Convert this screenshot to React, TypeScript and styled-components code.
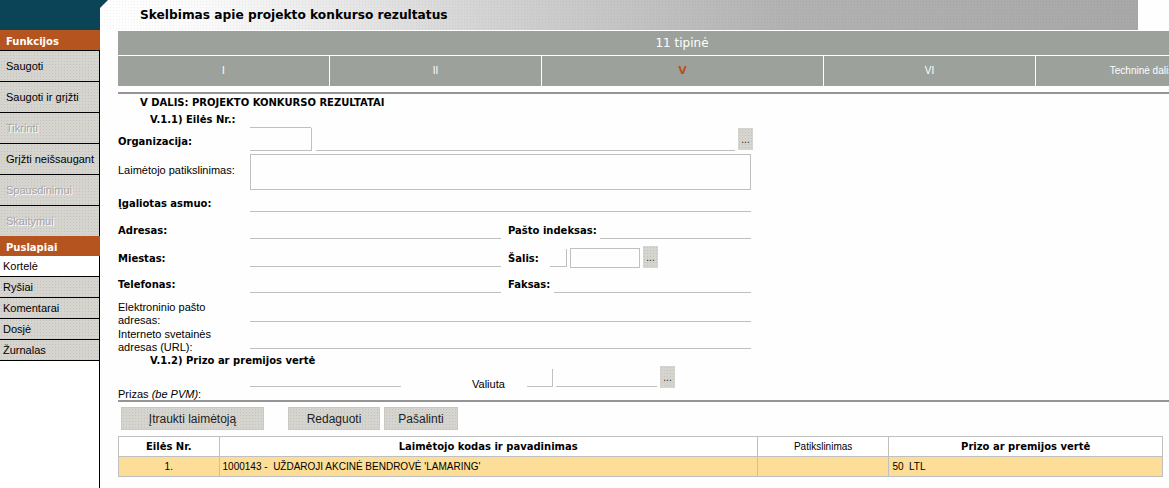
import styled, { createGlobalStyle } from 'styled-components';

const GlobalStyle = createGlobalStyle`
  html, body {
    margin: 0;
    padding: 0;
    background: #fdfefd;
    overflow: hidden;
  }
  body {
    font-family: 'Liberation Sans', Arial, sans-serif;
    font-size: 11px;
    color: #000;
  }
`;

const dots = `
  background-color: #d6d4cf;
  background-image: radial-gradient(#c4c2bd 0.6px, transparent 0.7px);
  background-size: 3px 3px;
`;

const Page = styled.div`
  display: flex;
  width: 1169px;
  height: 488px;
  overflow: hidden;
`;

/* ---------- sidebar ---------- */

const Sidebar = styled.div`
  width: 100px;
  flex-shrink: 0;
  display: flex;
  flex-direction: column;
  background: #fff;
`;

const Brand = styled.div`
  height: 30px;
  background: #0b4457;
  position: relative;
  &::after {
    content: '';
    position: absolute;
    right: -8px;
    top: 0;
    border-top: 8px solid #0b4457;
    border-right: 8px solid transparent;
  }
`;

const SideHeader = styled.div`
  height: 20px;
  background: #b5541e;
  color: #fff;
  font-family: 'DejaVu Sans', Verdana, sans-serif;
  font-weight: bold;
  font-size: 10px;
  line-height: 24px;
  padding-left: 6px;
`;

const SideButton = styled.div<{ $disabled?: boolean }>`
  height: 30px;
  ${dots}
  border-top: 1px solid #000;
  border-right: 1px solid #000;
  padding-left: 6px;
  line-height: 30px;
  font-size: 11px;
  color: ${(p) => (p.$disabled ? '#a4a4a4' : '#000')};
  text-shadow: ${(p) => (p.$disabled ? '1px 1px 0 #fff' : 'none')};
  white-space: nowrap;
  overflow: hidden;
`;

const PageLink = styled.div<{ $active?: boolean }>`
  height: 20px;
  ${(p) => (p.$active ? 'background: #fff;' : dots)}
  border-top: ${(p) => (p.$active ? 'none' : '1px solid #000')};
  border-right: 1px solid #000;
  padding-left: 3px;
  line-height: 21px;
  font-size: 11px;
`;

const SideRest = styled.div`
  flex: 1;
  border-top: 1px solid #000;
  border-right: 1px solid #000;
`;

/* ---------- main ---------- */

const Main = styled.div`
  flex: 1;
  display: flex;
  flex-direction: column;
  min-width: 0;
`;

const TitleBar = styled.div`
  width: 998px;
  height: 30px;
  padding-left: 40px;
  background-image: radial-gradient(rgba(0, 0, 0, 0.05) 0.6px, transparent 0.7px),
    linear-gradient(to right, #fff 0%, #fafafa 10%, #d2d2d2 38%, #b2b2b2 66%, #a8a8a8 100%);
  background-size: 3px 3px, 100% 100%;
  font-family: 'DejaVu Sans', Verdana, sans-serif;
  font-weight: bold;
  font-size: 12.2px;
  line-height: 31px;
`;

const Content = styled.div`
  padding-left: 18px;
  width: 1100px;
`;

const TypeBar = styled.div`
  height: 24px;
  width: 1100px;
  box-sizing: border-box;
  margin-top: 1px;
  padding-left: 28px;
  background: #9ca29b;
  color: #fff;
  font-family: 'DejaVu Sans', Verdana, sans-serif;
  font-size: 12px;
  line-height: 24px;
  text-align: center;
  white-space: nowrap;
`;

const Tabs = styled.div`
  display: flex;
  border-top: 1px solid #fff;
  width: 1200px;
`;

const Tab = styled.div<{ $w: number; $active?: boolean }>`
  width: ${(p) => p.$w}px;
  flex-shrink: 0;
  height: 30px;
  background: #9ca29b;
  border-right: 1px solid #fff;
  color: ${(p) => (p.$active ? '#b5531e' : '#fff')};
  font-family: ${(p) => (p.$active ? "'DejaVu Sans', Verdana, sans-serif" : "'Liberation Sans', Arial, sans-serif")};
  font-weight: ${(p) => (p.$active ? 'bold' : 'normal')};
  font-size: ${(p) => (p.$active ? '11px' : '10px')};
  line-height: 30px;
  text-align: center;
  white-space: nowrap;
`;

const Rule = styled.div<{ $top: number }>`
  margin-top: ${(p) => p.$top}px;
  width: 1051px;
  border-top: 2px solid #959595;
`;

const Heading = styled.div<{ $indent: number; $h: number; $pt?: number }>`
  height: ${(p) => p.$h}px;
  box-sizing: border-box;
  padding-left: ${(p) => p.$indent}px;
  padding-top: ${(p) => p.$pt ?? 0}px;
  font-family: 'DejaVu Sans', Verdana, sans-serif;
  font-weight: bold;
  font-size: 10px;
  display: flex;
  align-items: center;
`;

const Row = styled.div<{ $h: number; $center?: boolean }>`
  display: flex;
  height: ${(p) => p.$h}px;
  align-items: ${(p) => (p.$center ? 'center' : 'flex-end')};
`;

const Label = styled.div<{ $bold?: boolean; $w?: number; $indent?: number; $pb?: number; $drop?: number }>`
  width: ${(p) => p.$w ?? 132}px;
  box-sizing: border-box;
  flex-shrink: 0;
  line-height: 13px;
  padding-left: ${(p) => p.$indent ?? 0}px;
  padding-bottom: ${(p) => p.$pb ?? 2}px;
  margin-bottom: ${(p) => -(p.$drop ?? 0)}px;
  font-family: ${(p) => (p.$bold ? "'DejaVu Sans', Verdana, sans-serif" : "'Liberation Sans', Arial, sans-serif")};
  font-weight: ${(p) => (p.$bold ? 'bold' : 'normal')};
  font-size: ${(p) => (p.$bold ? '10px' : '11px')};
  white-space: nowrap;
`;

const Line = styled.input<{ $w: number; $h?: number; $right?: boolean; $lift?: number }>`
  width: ${(p) => p.$w}px;
  height: ${(p) => p.$h ?? 16}px;
  box-sizing: border-box;
  margin: 0 0 ${(p) => p.$lift ?? 0}px 0;
  padding: 0 2px;
  border: none;
  border-bottom: 1px solid #c0c0c0;
  border-right: ${(p) => (p.$right ? '1px solid #c0c0c0' : 'none')};
  background: transparent;
  font: inherit;
  flex-shrink: 0;
`;

const Box = styled.input<{ $w: number; $h: number }>`
  width: ${(p) => p.$w}px;
  height: ${(p) => p.$h}px;
  box-sizing: border-box;
  margin: 0;
  border: 1px solid #c0c0c0;
  background: transparent;
  flex-shrink: 0;
`;

const Area = styled.textarea`
  width: 501px;
  height: 36px;
  box-sizing: border-box;
  margin: 0;
  border: 1px solid #c0c0c0;
  background: transparent;
  resize: none;
`;

const Gap = styled.div<{ $w: number }>`
  width: ${(p) => p.$w}px;
  flex-shrink: 0;
`;

const Dots = styled.div<{ $lift?: number }>`
  width: 15px;
  height: 22px;
  box-sizing: border-box;
  margin-bottom: ${(p) => p.$lift ?? 0}px;
  ${dots}
  font-size: 10px;
  line-height: 24px;
  text-align: center;
  color: #222;
  flex-shrink: 0;
`;

const PrizeFields = styled.div`
  display: flex;
  align-items: flex-end;
  align-self: flex-start;
  height: 22px;
`;

const Currency = styled.div`
  width: 55px;
  padding-left: 71px;
  margin-bottom: -3px;
  line-height: 13px;
  font-size: 11px;
`;

const Actions = styled.div`
  display: flex;
  padding: 5px 0 6px 3px;
  gap: 4px;
`;

const Action = styled.button<{ $w: number; $space?: number }>`
  width: ${(p) => p.$w}px;
  height: 23px;
  margin: 0 0 0 ${(p) => p.$space ?? 0}px;
  padding: 0;
  border: 1px solid #cac8c3;
  ${dots}
  font-family: 'Liberation Sans', Arial, sans-serif;
  font-size: 12px;
  color: #222;
`;

const Grid = styled.table`
  width: 1045px;
  border-collapse: collapse;
  font-size: 10px;
`;

const Th = styled.th<{ $w: number; $light?: boolean }>`
  width: ${(p) => p.$w}px;
  height: 19px;
  padding: 0;
  border: 1px solid #c0c0c0;
  background: #fff;
  font-family: ${(p) => (p.$light ? "'Liberation Sans', Arial, sans-serif" : "'DejaVu Sans', Verdana, sans-serif")};
  font-weight: ${(p) => (p.$light ? 'normal' : 'bold')};
  font-size: 10px;
  text-align: center;
`;

const Td = styled.td<{ $center?: boolean }>`
  height: 19px;
  padding: 0 3px;
  border: 1px solid #c0c0c0;
  background: #fcde98;
  text-align: ${(p) => (p.$center ? 'center' : 'left')};
  white-space: pre;
`;

const functions = [
  { name: 'Saugoti' },
  { name: 'Saugoti ir grįžti' },
  { name: 'Tikrinti', disabled: true },
  { name: 'Grįžti neišsaugant' },
  { name: 'Spausdinimui', disabled: true },
  { name: 'Skaitymui', disabled: true },
];

const pages = ['Ryšiai', 'Komentarai', 'Dosjė', 'Žurnalas'];

const tabs = [
  { label: 'I', w: 211 },
  { label: 'II', w: 211 },
  { label: 'V', w: 281, active: true },
  { label: 'VI', w: 211 },
  { label: 'Techninė dalis', w: 211 },
];

const App = () => {
  return (
    <>
      <GlobalStyle />
      <Page>
        <Sidebar>
          <Brand />
          <SideHeader>Funkcijos</SideHeader>
          {functions.map((f) => (
            <SideButton key={f.name} $disabled={f.disabled}>
              {f.name}
            </SideButton>
          ))}
          <SideHeader>Puslapiai</SideHeader>
          <PageLink $active>Kortelė</PageLink>
          {pages.map((p) => (
            <PageLink key={p}>{p}</PageLink>
          ))}
          <SideRest />
        </Sidebar>

        <Main>
          <TitleBar>Skelbimas apie projekto konkurso rezultatus</TitleBar>
          <Content>
            <TypeBar>11 tipinė</TypeBar>
            <Tabs>
              {tabs.map((t) => (
                <Tab key={t.label} $w={t.w} $active={t.active}>
                  {t.label}
                </Tab>
              ))}
            </Tabs>
            <Rule $top={6} />

            <Heading $indent={22} $h={15} $pt={1}>
              V DALIS: PROJEKTO KONKURSO REZULTATAI
            </Heading>
            <Row $h={19}>
              <Label $bold $indent={32}>
                V.1.1) Eilės Nr.:
              </Label>
              <Line $w={61} />
            </Row>
            <Row $h={23}>
              <Label $bold $pb={3}>
                Organizacija:
              </Label>
              <Line $w={62} $h={23} $right />
              <Gap $w={4} />
              <Line $w={419} $h={23} />
              <Gap $w={3} />
              <Dots $lift={1}>...</Dots>
            </Row>
            <Row $h={41} $center>
              <Label>Laimėtojo patikslinimas:</Label>
              <Area />
            </Row>
            <Row $h={20}>
              <Label $bold>Įgaliotas asmuo:</Label>
              <Line $w={501} />
            </Row>
            <Row $h={27}>
              <Label $bold>Adresas:</Label>
              <Line $w={251} />
              <Gap $w={7} />
              <Label $bold $w={92}>
                Pašto indeksas:
              </Label>
              <Line $w={151} />
            </Row>
            <Row $h={29}>
              <Label $bold $pb={3}>
                Miestas:
              </Label>
              <Line $w={251} $lift={1} />
              <Gap $w={7} />
              <Label $bold $w={42} $pb={3}>
                Šalis:
              </Label>
              <Line $w={17} $h={18} $right $lift={1} />
              <Gap $w={3} />
              <Box $w={70} $h={20} />
              <Gap $w={3} />
              <Dots>...</Dots>
            </Row>
            <Row $h={25}>
              <Label $bold>Telefonas:</Label>
              <Line $w={251} />
              <Gap $w={7} />
              <Label $bold $w={46}>
                Faksas:
              </Label>
              <Line $w={197} />
            </Row>
            <Row $h={29}>
              <Label $pb={0} $drop={5}>
                Elektroninio pašto
                <br />
                adresas:
              </Label>
              <Line $w={501} />
            </Row>
            <Row $h={27}>
              <Label $pb={0} $drop={5}>
                Interneto svetainės
                <br />
                adresas (URL):
              </Label>
              <Line $w={501} />
            </Row>
            <Heading $indent={32} $h={17} $pt={5}>
              V.1.2) Prizo ar premijos vertė
            </Heading>
            <Row $h={33}>
              <Label $pb={0} $drop={2}>
                Prizas <i>(be PVM)</i>:
              </Label>
              <PrizeFields>
                <Line $w={151} $lift={1} />
                <Currency>Valiuta</Currency>
                <Line $w={26} $h={18} $right $lift={1} />
                <Gap $w={3} />
                <Line $w={101} $lift={1} />
                <Gap $w={3} />
                <Dots>...</Dots>
              </PrizeFields>
            </Row>
            <Rule $top={1} />
            <Actions>
              <Action $w={143}>Įtraukti laimėtoją</Action>
              <Action $w={92} $space={20}>
                Redaguoti
              </Action>
              <Action $w={74}>Pašalinti</Action>
            </Actions>
            <Grid>
              <thead>
                <tr>
                  <Th $w={100}>Eilės Nr.</Th>
                  <Th $w={539}>Laimėtojo kodas ir pavadinimas</Th>
                  <Th $w={131} $light>
                    Patikslinimas
                  </Th>
                  <Th $w={274}>Prizo ar premijos vertė</Th>
                </tr>
              </thead>
              <tbody>
                <tr>
                  <Td $center>1.</Td>
                  <Td>{"1000143 -  UŽDAROJI AKCINĖ BENDROVĖ 'LAMARING'"}</Td>
                  <Td />
                  <Td>50  LTL</Td>
                </tr>
              </tbody>
            </Grid>
          </Content>
        </Main>
      </Page>
    </>
  );
};

export default App;
